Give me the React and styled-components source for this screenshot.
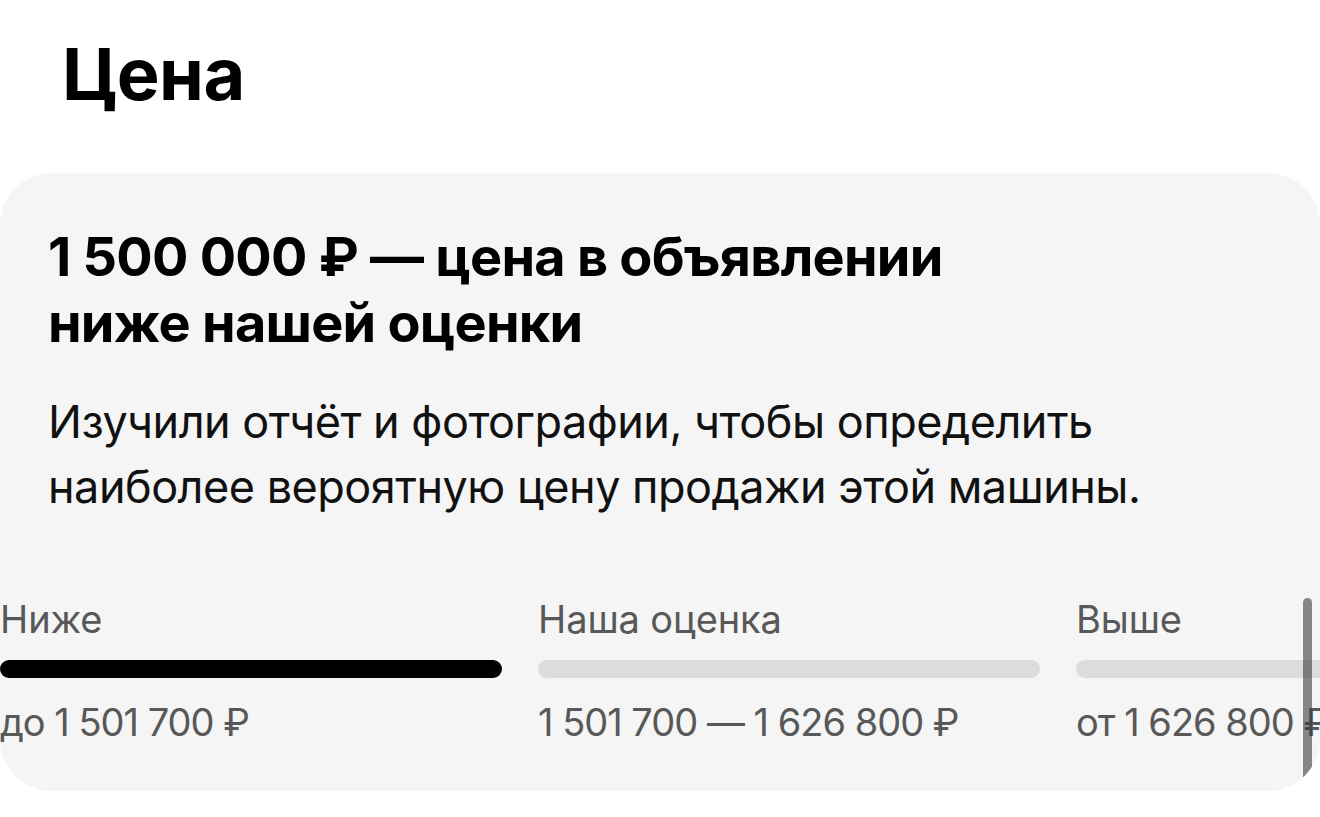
import React from 'react'
import styled, { createGlobalStyle } from 'styled-components'

const GlobalStyle = createGlobalStyle`
    html, body {
        margin: 0;
        padding: 0;
        background: #ffffff;
    }
    body {
        font-family: Inter, "Noto Sans", "Liberation Sans", sans-serif;
        color: #000;
        -webkit-font-smoothing: antialiased;
    }
    * {
        box-sizing: border-box;
    }
`

const ranges = [
    { label: 'Ниже', value: 'до 1 501 700 ₽', active: true },
    { label: 'Наша оценка', value: '1 501 700 — 1 626 800 ₽', active: false },
    { label: 'Выше', value: 'от 1 626 800 ₽', active: false },
]

function App() {
    return (
        <Page>
            <GlobalStyle />
            <Title>Цена</Title>
            <Card>
                <Content>
                    <Heading>
                        1 500 000 ₽ — цена в объявлении
                        <br />
                        ниже нашей оценки
                    </Heading>
                    <Description>
                        Изучили отчёт и фотографии, чтобы определить
                        <br />
                        наиболее вероятную цену продажи этой машины.
                    </Description>
                </Content>
                <Scale>
                    {ranges.map((r) => (
                        <Range key={r.label}>
                            <RangeLabel>{r.label}</RangeLabel>
                            <Bar $active={r.active} />
                            <RangeValue>{r.value}</RangeValue>
                        </Range>
                    ))}
                </Scale>
                <ScrollThumb />
            </Card>
        </Page>
    )
}

const Page = styled.div`
    width: 1320px;
    padding-top: 30px;
`

const Title = styled.h1`
    margin: 0 0 56px 62px;
    font-size: 72px;
    line-height: 87px;
    font-weight: 700;
    letter-spacing: -0.5px;
`

const Card = styled.section`
    position: relative;
    width: 1320px;
    background: #f5f5f5;
    border-radius: 52px;
    overflow: hidden;
    padding: 51px 0 45px;
`

const Content = styled.div`
    padding: 0 48px;
`

const Heading = styled.h2`
    margin: 0;
    font-size: 54px;
    line-height: 66px;
    font-weight: 700;
    letter-spacing: -0.75px;
`

const Description = styled.p`
    margin: 33px 0 0;
    font-size: 45px;
    line-height: 65px;
    font-weight: 400;
    color: #111;
    letter-spacing: -0.5px;
`

const Scale = styled.div`
    display: flex;
    gap: 36px;
    margin-top: 76px;
    overflow: hidden;
`

const Range = styled.div`
    flex: 0 0 ${(p) => p.$width || 502}px;
    display: flex;
    flex-direction: column;
`

const RangeLabel = styled.div`
    font-size: 38px;
    line-height: 48px;
    color: #585858;
    letter-spacing: -0.1px;
    white-space: nowrap;
`

const Bar = styled.div`
    height: 18px;
    margin: 17px 0 20px;
    border-radius: 9px;
    background: ${(p) => (p.$active ? '#000000' : '#dcdcdc')};
`

const RangeValue = styled.div`
    font-size: 38px;
    line-height: 48px;
    color: #585858;
    letter-spacing: -1px;
    white-space: nowrap;
`

const ScrollThumb = styled.div`
    position: absolute;
    right: 8px;
    top: 425px;
    width: 9px;
    height: 190px;
    border-radius: 5px;
    background: rgba(60, 60, 60, 0.6);
`

export default App
